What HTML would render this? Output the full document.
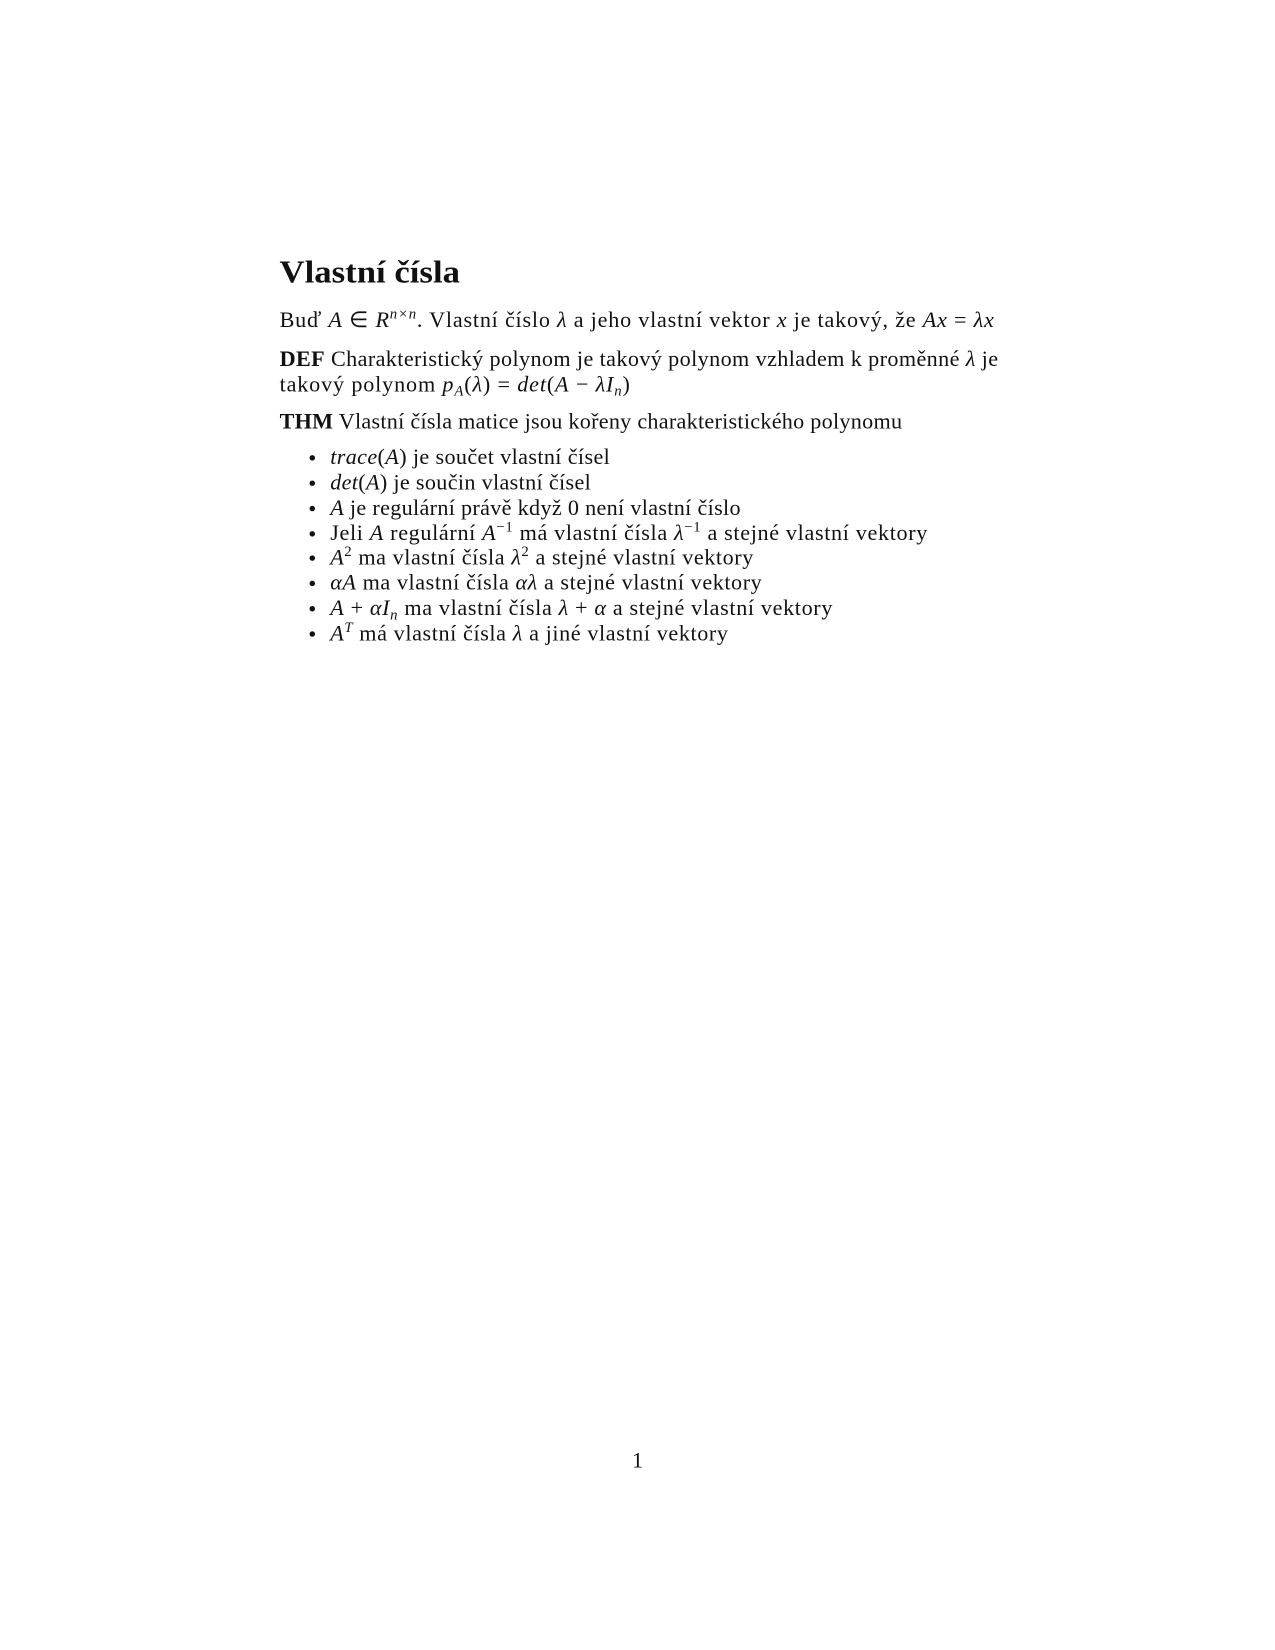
<!DOCTYPE html>
<html><head><meta charset="utf-8"><style>
html,body{margin:0;padding:0;background:#fff;}
svg{display:block;}
text{font-family:"Liberation Serif",serif;fill:#111;font-size:21px;}
.i{font-style:italic;}
.b{font-weight:bold;}
</style></head><body>
<svg width="1275" height="1650" viewBox="0 0 1275 1650" xmlns="http://www.w3.org/2000/svg">
<g transform="scale(1.055)">
<text x="265" y="268" style="font-size:30px;font-weight:bold" textLength="171" lengthAdjust="spacingAndGlyphs">Vlastní čísla</text>
<text x="265" y="310" textLength="677" lengthAdjust="spacing">Buď <tspan class="i">A</tspan> ∈ <tspan class="i">R</tspan><tspan class="i" dy="-8" font-size="14">n×n</tspan><tspan dy="8">. Vlastní číslo </tspan><tspan class="i">λ</tspan> a jeho vlastní vektor <tspan class="i">x</tspan> je takový, že <tspan class="i">Ax</tspan> = <tspan class="i">λx</tspan></text>
<text x="265" y="347" textLength="681" lengthAdjust="spacing"><tspan class="b">DEF</tspan> Charakteristický polynom je takový polynom vzhladem k proměnné <tspan class="i">λ</tspan> je</text>
<text x="265" y="371" textLength="332" lengthAdjust="spacing">takový polynom <tspan class="i">p</tspan><tspan class="i" dy="4" font-size="14">A</tspan><tspan dy="-4">(</tspan><tspan class="i">λ</tspan>) = <tspan class="i">det</tspan>(<tspan class="i">A</tspan> − <tspan class="i">λI</tspan><tspan class="i" dy="4" font-size="14">n</tspan><tspan dy="-4">)</tspan></text>
<text x="265" y="406" textLength="590" lengthAdjust="spacing"><tspan class="b">THM</tspan> Vlastní čísla matice jsou kořeny charakteristického polynomu</text>
<g>
<circle cx="296" cy="434" r="2.6" fill="#111"/>
<circle cx="296" cy="458" r="2.6" fill="#111"/>
<circle cx="296" cy="482" r="2.6" fill="#111"/>
<circle cx="296" cy="506" r="2.6" fill="#111"/>
<circle cx="296" cy="529" r="2.6" fill="#111"/>
<circle cx="296" cy="553" r="2.6" fill="#111"/>
<circle cx="296" cy="577" r="2.6" fill="#111"/>
<circle cx="296" cy="601" r="2.6" fill="#111"/>
</g>
<text x="313" y="440" textLength="265" lengthAdjust="spacing"><tspan class="i">trace</tspan>(<tspan class="i">A</tspan>) je součet vlastní čísel</text>
<text x="313" y="464" textLength="247" lengthAdjust="spacing"><tspan class="i">det</tspan>(<tspan class="i">A</tspan>) je součin vlastní čísel</text>
<text x="313" y="488" textLength="389" lengthAdjust="spacing"><tspan class="i">A</tspan> je regulární právě když 0 není vlastní číslo</text>
<text x="313" y="512" textLength="566" lengthAdjust="spacing">Jeli <tspan class="i">A</tspan> regulární <tspan class="i">A</tspan><tspan dy="-8" font-size="14">−1</tspan><tspan dy="8"> má vlastní čísla </tspan><tspan class="i">λ</tspan><tspan dy="-8" font-size="14">−1</tspan><tspan dy="8"> a stejné vlastní vektory</tspan></text>
<text x="313" y="535" textLength="401" lengthAdjust="spacing"><tspan class="i">A</tspan><tspan dy="-8" font-size="14">2</tspan><tspan dy="8"> ma vlastní čísla </tspan><tspan class="i">λ</tspan><tspan dy="-8" font-size="14">2</tspan><tspan dy="8"> a stejné vlastní vektory</tspan></text>
<text x="313" y="559" textLength="409" lengthAdjust="spacing"><tspan class="i">αA</tspan> ma vlastní čísla <tspan class="i">αλ</tspan> a stejné vlastní vektory</text>
<text x="313" y="583" textLength="476" lengthAdjust="spacing"><tspan class="i">A</tspan> + <tspan class="i">αI</tspan><tspan class="i" dy="4" font-size="14">n</tspan><tspan dy="-4"> ma vlastní čísla </tspan><tspan class="i">λ</tspan> + <tspan class="i">α</tspan> a stejné vlastní vektory</text>
<text x="313" y="607" textLength="377" lengthAdjust="spacing"><tspan class="i">A</tspan><tspan class="i" dy="-8" font-size="14">T</tspan><tspan dy="8"> má vlastní čísla </tspan><tspan class="i">λ</tspan> a jiné vlastní vektory</text>
<text x="599" y="1391">1</text>
</g>
</svg>
</body></html>
